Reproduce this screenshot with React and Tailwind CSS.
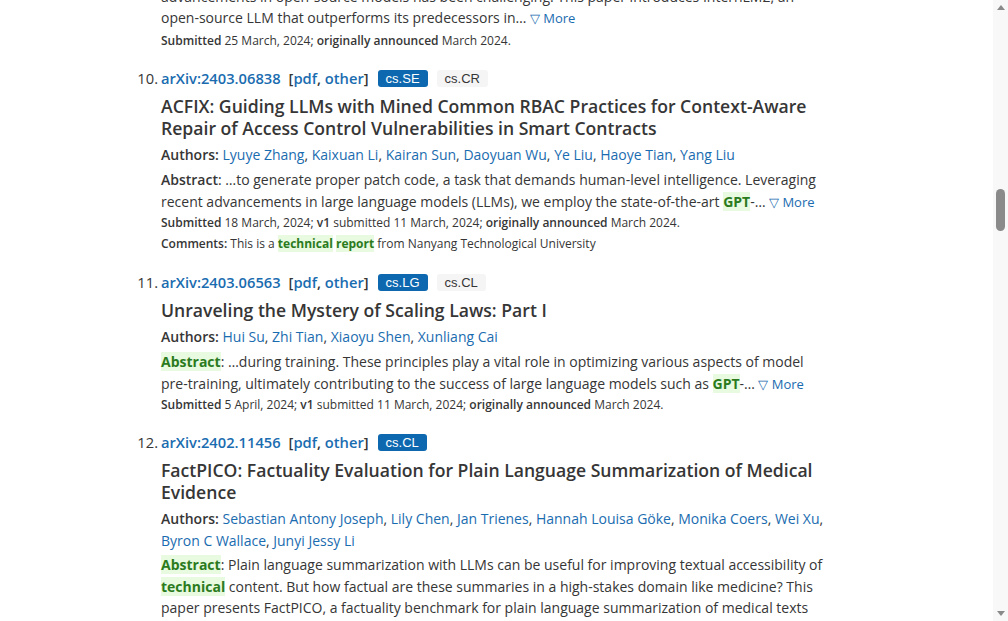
const LINK = "text-[#1a6cb0]";

const Hl = ({ children }) => (
  <span className="bg-[#e8fadf] font-bold text-[#2b7a1e]">{children}</span>
);

const More = () => (
  <span className={`${LINK} text-[13px]`}>
    {" "}
    ▽ More
  </span>
);

const Tag = ({ primary, children }) => (
  <span
    className={`ml-[9px] inline-block rounded-[3px] px-[8px] text-[13px] leading-[17px] [font-family:'Liberation_Sans',Arial,sans-serif] ${
      primary ? "bg-[#0d68b0] text-white" : "bg-[#f5f5f5] text-[#363636]"
    }`}
  >
    {children}
  </span>
);

const AuthorList = ({ names }) => (
  <p className="mt-[5px] text-[14px] leading-[22px]">
    <span className="font-semibold">Authors: </span>
    {names.map((name, i) => (
      <span key={name}>
        <span className={LINK}>{name}</span>
        {i < names.length - 1 ? ", " : ""}
      </span>
    ))}
  </p>
);

const Header = ({ num, id, tags }) => (
  <div className="flex items-center text-[14.7px] leading-[22px]">
    <span className="-ml-[24px] w-[21px] text-right">{num}.</span>
    <span className={`ml-[3px] font-semibold ${LINK}`}>arXiv:{id}</span>
    <span className="ml-[8px] font-semibold">
      [<span className={LINK}>pdf</span>, <span className={LINK}>other</span>]
    </span>
    {tags.map((t, i) => (
      <Tag key={t} primary={i === 0}>
        {t}
      </Tag>
    ))}
  </div>
);

const Title = ({ children }) => (
  <p className="mt-[6px] text-[17.6px] font-semibold leading-[22px] text-[#363636]">{children}</p>
);

const Abstract = ({ children }) => <p className="mt-[3px] text-[14px] leading-[21.5px]">{children}</p>;

const Dates = ({ submitted, v1, top = "mt-[1px]" }) => (
  <p className={`${top} text-[12px] leading-[18px]`}>
    <span className="font-semibold">Submitted</span> {submitted};{" "}
    {v1 && (
      <>
        <span className="font-semibold">v1</span> submitted {v1};{" "}
      </>
    )}
    <span className="font-semibold">originally announced</span> March 2024.
  </p>
);

export default function App() {
  return (
    <div className="flex h-[621px] w-full overflow-hidden bg-white text-[#363636] [font-family:'Open_Sans',sans-serif]">
      <main className="flex-1 pl-[161px]">
        <div className="w-[672px]">
          <div className="-mt-[14px]">
            <p className="text-[14px] leading-[21px]">
              advancements in open-source models has been challenging. This paper introduces InternLM2, an
              open-source LLM that outperforms its predecessors in…
              <More />
            </p>
            <Dates submitted="25 March, 2024" top="mt-[3px]" />
          </div>

          <section className="mt-[17px]">
            <Header num="10" id="2403.06838" tags={["cs.SE", "cs.CR"]} />
            <Title>
              ACFIX: Guiding LLMs with Mined Common RBAC Practices for Context-Aware Repair of Access Control
              Vulnerabilities in Smart Contracts
            </Title>
            <AuthorList
              names={["Lyuye Zhang", "Kaixuan Li", "Kairan Sun", "Daoyuan Wu", "Ye Liu", "Haoye Tian", "Yang Liu"]}
            />
            <Abstract>
              <span className="font-semibold">Abstract</span>: …to generate proper patch code, a task that demands
              human-level intelligence. Leveraging recent advancements in large language models (LLMs), we employ
              the state-of-the-art <Hl>GPT</Hl>-…
              <More />
            </Abstract>
            <Dates submitted="18 March, 2024" v1="11 March, 2024" />
            <p className="mt-[3px] text-[12px] leading-[18px]">
              <span className="font-semibold">Comments:</span> This is a <Hl>technical</Hl> <Hl>report</Hl> from
              Nanyang Technological University
            </p>
          </section>

          <section className="mt-[18px]">
            <Header num="11" id="2403.06563" tags={["cs.LG", "cs.CL"]} />
            <Title>Unraveling the Mystery of Scaling Laws: Part I</Title>
            <AuthorList names={["Hui Su", "Zhi Tian", "Xiaoyu Shen", "Xunliang Cai"]} />
            <Abstract>
              <Hl>Abstract</Hl>: …during training. These principles play a vital role in optimizing various aspects
              of model pre-training, ultimately contributing to the success of large language models such as{" "}
              <Hl>GPT</Hl>-…
              <More />
            </Abstract>
            <Dates submitted="5 April, 2024" v1="11 March, 2024" />
          </section>

          <section className="mt-[17px]">
            <Header num="12" id="2402.11456" tags={["cs.CL"]} />
            <Title>FactPICO: Factuality Evaluation for Plain Language Summarization of Medical Evidence</Title>
            <AuthorList
              names={[
                "Sebastian Antony Joseph",
                "Lily Chen",
                "Jan Trienes",
                "Hannah Louisa Göke",
                "Monika Coers",
                "Wei Xu",
                "Byron C Wallace",
                "Junyi Jessy Li",
              ]}
            />
            <div className="-mt-[1px]">
              <Abstract>
                <Hl>Abstract</Hl>: Plain language summarization with LLMs can be useful for improving textual
                accessibility of <Hl>technical</Hl> content. But how factual are these summaries in a high-stakes
                domain like medicine? This paper presents FactPICO, a factuality benchmark for plain language
                summarization of medical texts describing randomized controlled trials.
              </Abstract>
            </div>
          </section>
        </div>
      </main>

      <aside className="flex w-[15px] flex-col items-center justify-between bg-[#f8f8f8] py-[5px]">
        <svg width="8" height="5" viewBox="0 0 8 5">
          <path d="M0 5 L4 0 L8 5 Z" fill="#8a8a8a" />
        </svg>
        <div className="flex flex-1 flex-col pt-[179px]">
          <div className="h-[42px] w-[9px] rounded-[5px] bg-[#8a8a8a]" />
        </div>
        <svg width="8" height="5" viewBox="0 0 8 5">
          <path d="M0 0 L8 0 L4 5 Z" fill="#8a8a8a" />
        </svg>
      </aside>
    </div>
  );
}
